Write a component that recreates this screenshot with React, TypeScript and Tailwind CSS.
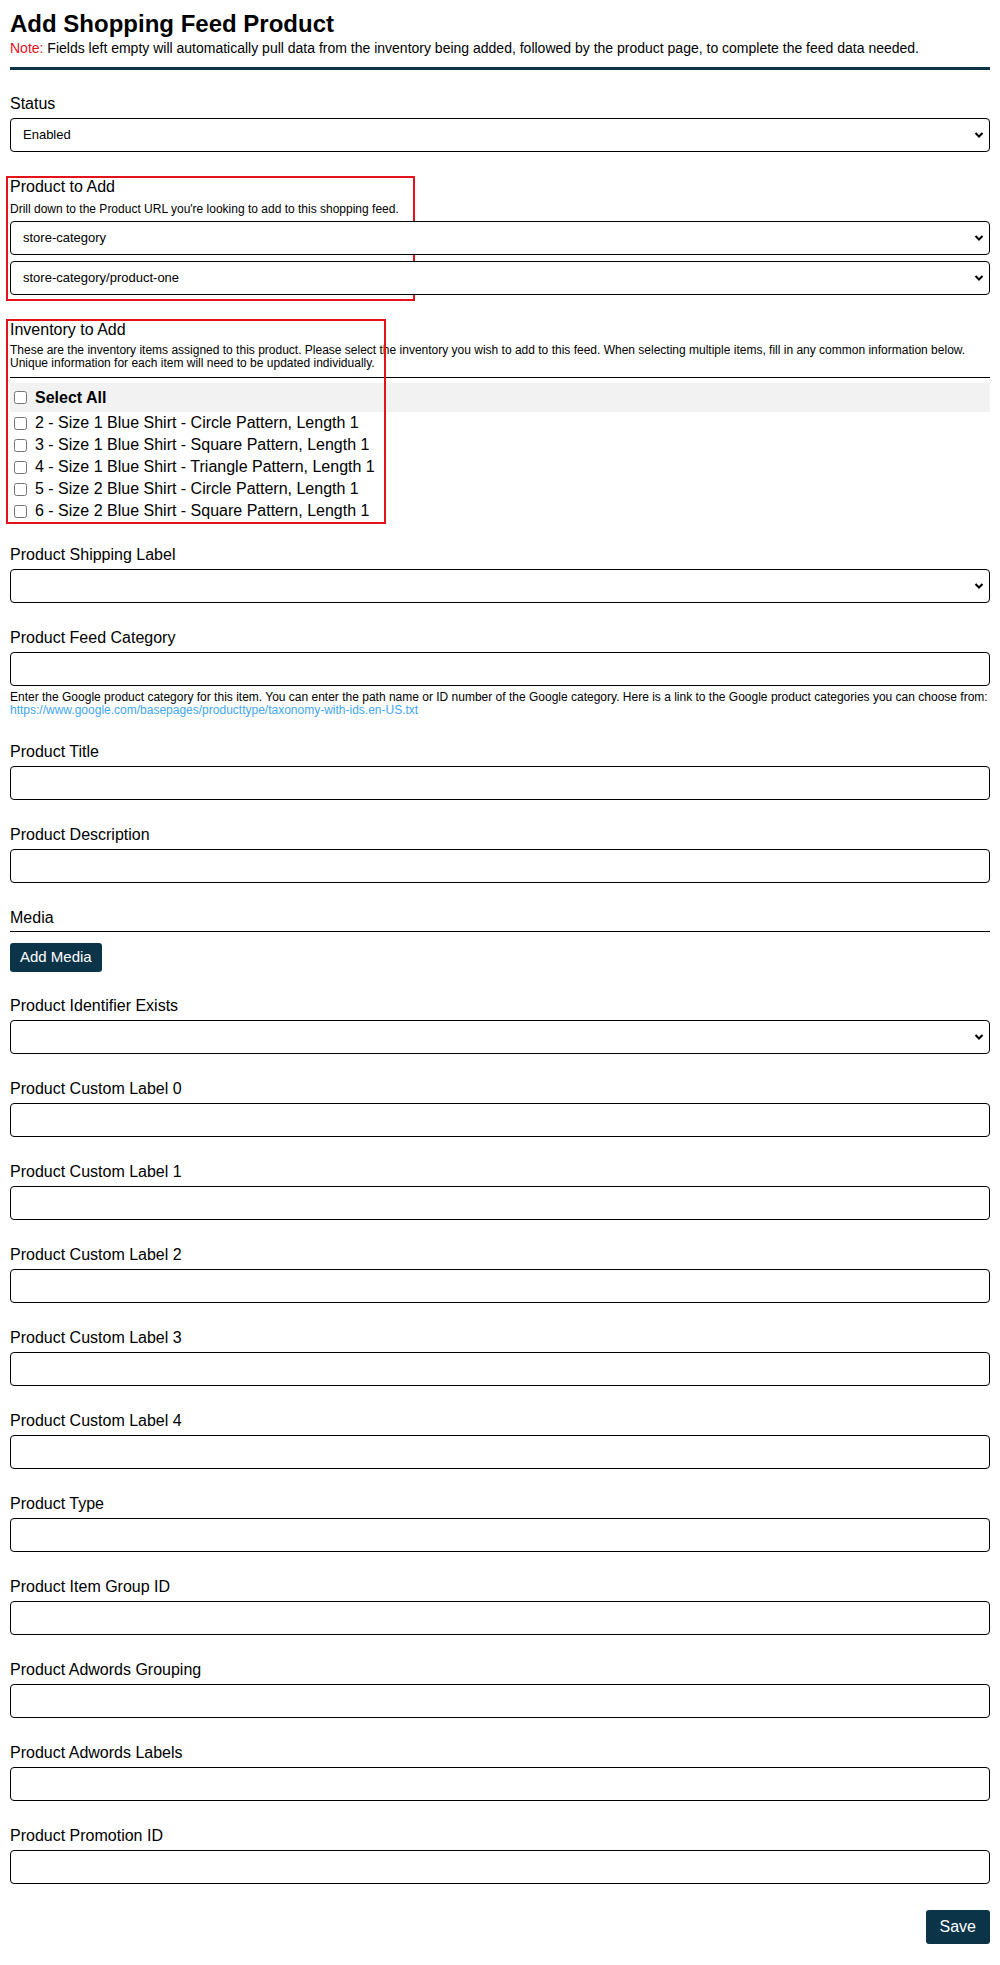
import React from "react";

const Chevron = () => (
  <svg
    width="10"
    height="7"
    viewBox="0 0 10 7"
    className="pointer-events-none absolute right-[6px] top-1/2 -translate-y-1/2"
  >
    <path d="M1.5 1.5L5 5l3.5-3.5" fill="none" stroke="#000" strokeWidth="2" />
  </svg>
);

const SelectBox = ({ value, options = [] }: { value?: string; options?: string[] }) => (
  <div className="relative">
    <select
      defaultValue={value}
      className="block h-[34px] w-full appearance-none rounded-[4px] border border-black bg-white pl-[12px] pr-[24px] text-[13px] text-black"
    >
      {options.map((o) => (
        <option key={o}>{o}</option>
      ))}
    </select>
    <Chevron />
  </div>
);

const TextBox = () => (
  <input
    type="text"
    className="block h-[34px] w-full rounded-[4px] border border-black bg-white px-[12px] text-[13px]"
  />
);

const Label = ({ children }: { children: React.ReactNode }) => (
  <div className="mb-[5px] text-[16px] leading-[18px]">{children}</div>
);

const CheckRow = ({ text, bold }: { text: string; bold?: boolean }) => (
  <label className="flex h-full items-center">
    <input type="checkbox" className="ml-[4px] h-[13px] w-[13px]" />
    <span className={`ml-[8px] text-[16px] ${bold ? "font-bold" : ""}`}>{text}</span>
  </label>
);

const inventory = [
  "2 - Size 1 Blue Shirt - Circle Pattern, Length 1",
  "3 - Size 1 Blue Shirt - Square Pattern, Length 1",
  "4 - Size 1 Blue Shirt - Triangle Pattern, Length 1",
  "5 - Size 2 Blue Shirt - Circle Pattern, Length 1",
  "6 - Size 2 Blue Shirt - Square Pattern, Length 1",
];

const textFields = [
  "Product Custom Label 0",
  "Product Custom Label 1",
  "Product Custom Label 2",
  "Product Custom Label 3",
  "Product Custom Label 4",
  "Product Type",
  "Product Item Group ID",
  "Product Adwords Grouping",
  "Product Adwords Labels",
  "Product Promotion ID",
];

export default function App() {
  return (
    <div
      className="min-h-[1965px] bg-white px-[10px] pt-[10px] pb-[22px] text-black"
      style={{ fontFamily: '"Liberation Sans", Arial, sans-serif' }}
    >
      <h1 className="text-[24px] font-bold leading-[28px]">Add Shopping Feed Product</h1>
      <p className="mt-[2px] text-[14px] leading-[16px]">
        <span className="text-[#e8101e]">Note:</span> Fields left empty will automatically pull data
        from the inventory being added, followed by the product page, to complete the feed data
        needed.
      </p>
      <div className="mt-[11px] mb-[25px] h-[3px] bg-[#0b3448]" />

      {/* status */}
      <div className="mb-[26px]">
        <Label>Status</Label>
        <SelectBox value="Enabled" options={["Enabled", "Disabled"]} />
      </div>

      {/* product to add */}
      <div className="relative mb-[26px]">
        <div className="pointer-events-none absolute -top-[2px] -left-[4px] -bottom-[6px] w-[409px] border-2 border-[#e3121b]" />
        <div className="text-[16px] leading-[18px]">Product to Add</div>
        <div className="mt-[6px] mb-[5px] text-[12px] leading-[14px]">
          Drill down to the Product URL you're looking to add to this shopping feed.
        </div>
        <SelectBox value="store-category" options={["store-category"]} />
        <div className="mt-[6px]">
          <SelectBox value="store-category/product-one" options={["store-category/product-one"]} />
        </div>
      </div>

      {/* inventory to add */}
      <div className="relative mb-[24px]">
        <div className="pointer-events-none absolute -top-[2px] -left-[4px] -bottom-[2px] w-[380px] border-2 border-[#e3121b]" />
        <div className="text-[16px] leading-[18px]">Inventory to Add</div>
        <div className="mt-[5px] text-[12px] leading-[13px]">
          These are the inventory items assigned to this product. Please select the inventory you
          wish to add to this feed. When selecting multiple items, fill in any common information
          below.
          <br />
          Unique information for each item will need to be updated individually.
        </div>
        <div className="mt-[7px] border-t border-black" />
        <div className="mt-[5px] h-[29px] bg-[#f2f2f2]">
          <CheckRow text="Select All" bold />
        </div>
        {inventory.map((item) => (
          <div key={item} className="h-[22px]">
            <CheckRow text={item} />
          </div>
        ))}
      </div>

      <div className="mb-[26px]">
        <Label>Product Shipping Label</Label>
        <SelectBox value="" options={[""]} />
      </div>

      <div className="mb-[26px]">
        <Label>Product Feed Category</Label>
        <TextBox />
        <div className="mt-[5px] whitespace-nowrap text-[12px] leading-[13px]">
          Enter the Google product category for this item. You can enter the path name or ID number
          of the Google category. Here is a link to the Google product categories you can choose
          from:
          <br />
          <a href="#" className="text-[#3fa6f2]">
            https://www.google.com/basepages/producttype/taxonomy-with-ids.en-US.txt
          </a>
        </div>
      </div>

      <div className="mb-[26px]">
        <Label>Product Title</Label>
        <TextBox />
      </div>

      <div className="mb-[26px]">
        <Label>Product Description</Label>
        <TextBox />
      </div>

      {/* media */}
      <div className="mb-[25px]">
        <div className="border-b border-black pb-[4px] text-[16px] leading-[18px]">Media</div>
        <button className="mt-[11px] h-[29px] rounded-[3px] bg-[#0b3448] px-[10px] text-[15px] text-white">
          Add Media
        </button>
      </div>

      <div className="mb-[26px]">
        <Label>Product Identifier Exists</Label>
        <SelectBox value="" options={["", "Yes", "No"]} />
      </div>

      {textFields.map((f) => (
        <div key={f} className="mb-[26px]">
          <Label>{f}</Label>
          <TextBox />
        </div>
      ))}

      <div className="flex justify-end">
        <button className="h-[34px] rounded-[3px] bg-[#0b3448] px-[14px] text-[16px] text-white">
          Save
        </button>
      </div>
    </div>
  );
}
